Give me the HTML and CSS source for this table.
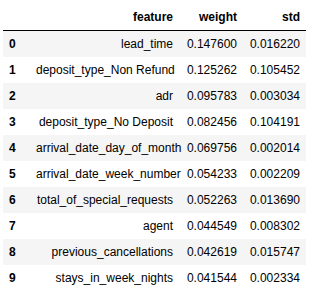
FILE: index.html
```html
<!DOCTYPE html>
<html lang="en">
<head>
  <meta charset="UTF-8" />
  <title>Feature weights</title>
  <link rel="stylesheet" href="styles.css">
</head>
<body>
  <table class="dataframe">
    <thead>
      <tr>
        <th class="col-index"></th>
        <th class="col-feature">feature</th>
        <th class="col-weight">weight</th>
        <th class="col-std">std</th>
      </tr>
    </thead>
    <tbody>
      <tr><th>0</th><td>lead_time</td><td>0.147600</td><td>0.016220</td></tr>
      <tr><th>1</th><td>deposit_type_Non Refund</td><td>0.125262</td><td>0.105452</td></tr>
      <tr><th>2</th><td>adr</td><td>0.095783</td><td>0.003034</td></tr>
      <tr><th>3</th><td>deposit_type_No Deposit</td><td>0.082456</td><td>0.104191</td></tr>
      <tr><th>4</th><td>arrival_date_day_of_month</td><td>0.069756</td><td>0.002014</td></tr>
      <tr><th>5</th><td>arrival_date_week_number</td><td>0.054233</td><td>0.002209</td></tr>
      <tr><th>6</th><td>total_of_special_requests</td><td>0.052263</td><td>0.013690</td></tr>
      <tr><th>7</th><td>agent</td><td>0.044549</td><td>0.008302</td></tr>
      <tr><th>8</th><td>previous_cancellations</td><td>0.042619</td><td>0.015747</td></tr>
      <tr><th>9</th><td>stays_in_week_nights</td><td>0.041544</td><td>0.002334</td></tr>
    </tbody>
  </table>
</body>
</html>
```

FILE: styles.css
```css
body {
  margin: 0;
  padding: 4px 0 0 3px;
  background-color: #fff;
  font-family: "Liberation Sans", Arial, sans-serif;
  color: #000;
}

.dataframe {
  font-size: 12px;
  table-layout: fixed;
  border-collapse: collapse;
  border: none;
  width: 303px;
}

.dataframe th,
.dataframe td {
  box-sizing: border-box;
  text-align: right;
  vertical-align: middle;
  padding: 6px;
  line-height: 14px;
  white-space: nowrap;
  border: none;
}

.dataframe th {
  font-weight: bold;
}

.dataframe thead {
  border-bottom: 1px solid #000;
}

.dataframe tbody th {
  text-align: left;
}

.dataframe tbody tr:nth-child(odd) {
  background: #f5f5f5;
}

.col-index {
  width: 27px;
}

.col-feature {
  width: 149px;
}

.col-weight {
  width: 64px;
}

.col-std {
  width: 63px;
}
```
